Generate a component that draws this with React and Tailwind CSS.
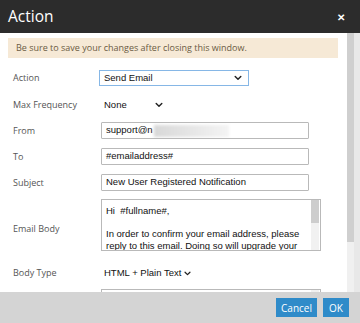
import { useState } from "react";

const Chevron = ({ className = "" }) => (
  <svg viewBox="0 0 10 6" className={className} fill="none">
    <polyline
      points="1.5,1.2 5,4.6 8.5,1.2"
      stroke="#222"
      strokeWidth="1.8"
      strokeLinecap="round"
      strokeLinejoin="round"
    />
  </svg>
);

function Label({ children, className = "" }) {
  return (
    <div className={`w-[101px] shrink-0 pl-[13px] text-[9px] text-[#555] ${className}`}>
      {children}
    </div>
  );
}

function TextInput({ children }) {
  return (
    <div className="w-[208px] h-[17px] border border-[#b9b9b9] rounded-[1px] bg-white flex items-center px-[4px] text-[9.5px] text-[#111] font-['Liberation_Sans',Arial,sans-serif] overflow-hidden whitespace-nowrap">
      {children}
    </div>
  );
}

export default function App() {
  const [action] = useState("Send Email");

  return (
    <div className="w-[360px] h-[323px] flex flex-col bg-white overflow-hidden font-['Open_Sans','Noto_Sans',sans-serif]">
      <div className="h-[33px] shrink-0 bg-[#2c2c2c] flex items-center justify-between pl-[8px] pr-[15px]">
        <span className="text-white text-[15.5px] leading-none">Action</span>
        <span className="text-white text-[10px] font-bold leading-none">✕</span>
      </div>

      <div className="flex-1 flex min-h-0">
        <div className="flex-1 overflow-hidden">
          <div className="mt-[5px] mx-[8px] w-[330px] h-[20px] bg-[#f6e9d6] flex items-center pl-[8px] text-[9px] text-[#6b5b43]">
            Be sure to save your changes after closing this window.
          </div>

          <div className="mt-[12px] h-[16px] flex items-center">
            <Label>Action</Label>
            <div className="ml-[-2px] w-[150px] h-[16px] border border-[#86b7e6] bg-white flex items-center justify-between pl-[4px] pr-[6px] text-[9.5px] text-[#111] font-['Liberation_Sans',Arial,sans-serif]">
              <span>{action}</span>
              <Chevron className="w-[8px] h-[6px]" />
            </div>
          </div>

          <div className="mt-[11px] h-[16px] flex items-center">
            <Label>Max Frequency</Label>
            <div className="pl-[3px] flex items-center text-[9.5px] text-[#111] font-['Liberation_Sans',Arial,sans-serif]">
              <span className="w-[51px]">None</span>
              <Chevron className="w-[8px] h-[6px]" />
            </div>
          </div>

          <div className="mt-[9px] flex items-center">
            <Label>From</Label>
            <TextInput>
              <span>support@n</span>
              <span className="ml-[1px] w-[75px] h-[12px] bg-gradient-to-r from-[#d8d8d8] via-[#e6e6e6] to-[#f4f4f4] blur-[1.5px]" />
            </TextInput>
          </div>

          <div className="mt-[9px] flex items-center">
            <Label>To</Label>
            <TextInput>#emailaddress#</TextInput>
          </div>

          <div className="mt-[9px] flex items-center">
            <Label>Subject</Label>
            <TextInput>New User Registered Notification</TextInput>
          </div>

          <div className="mt-[8px] flex items-start">
            <Label className="mt-[23px]">Email Body</Label>
            <div className="w-[220px] h-[52px] border border-[#b9b9b9] bg-white flex overflow-hidden">
              <div className="flex-1 pl-[4px] pt-[5px] text-[9.5px] leading-[11.7px] text-[#111] font-['Liberation_Sans',Arial,sans-serif] whitespace-nowrap">
                <div>Hi&nbsp;&nbsp;#fullname#,</div>
                <div>&nbsp;</div>
                <div>In order to confirm your email address, please</div>
                <div>reply to this email. Doing so will upgrade your</div>
              </div>
              <div className="w-[8px] shrink-0 flex flex-col bg-[#f1f1f1] mr-[1px]">
                <div className="h-[23px] bg-[#cdcdcd]" />
              </div>
            </div>
          </div>

          <div className="mt-[14px] h-[16px] flex items-center">
            <Label>Body Type</Label>
            <div className="pl-[3px] flex items-center gap-[3px] text-[9.5px] text-[#111] font-['Liberation_Sans',Arial,sans-serif]">
              <span>HTML + Plain Text</span>
              <Chevron className="w-[7px] h-[5px]" />
            </div>
          </div>

          <div className="mt-[8px] flex">
            <div className="w-[101px]" />
            <div className="w-[220px] h-[30px] border border-[#b9b9b9] bg-white flex justify-end">
              <div className="w-[8px] bg-[#f1f1f1] mr-[1px]" />
            </div>
          </div>
        </div>

        <div className="w-[13px] shrink-0 flex bg-[#e8e8e8]">
          <div className="w-[7px] flex flex-col bg-[#f0f0f0]">
            <div className="h-[209px] bg-[#cfcfcf]" />
          </div>
        </div>
      </div>

      <div className="h-[31px] shrink-0 bg-[#d4d4d4] flex items-center justify-end gap-[6px] pr-[11px]">
        <button className="h-[19px] w-[41px] bg-[#2f8bc9] text-white text-[10px] leading-none">Cancel</button>
        <button className="h-[19px] w-[26px] bg-[#2f8bc9] text-white text-[10px] leading-none">OK</button>
      </div>
    </div>
  );
}
